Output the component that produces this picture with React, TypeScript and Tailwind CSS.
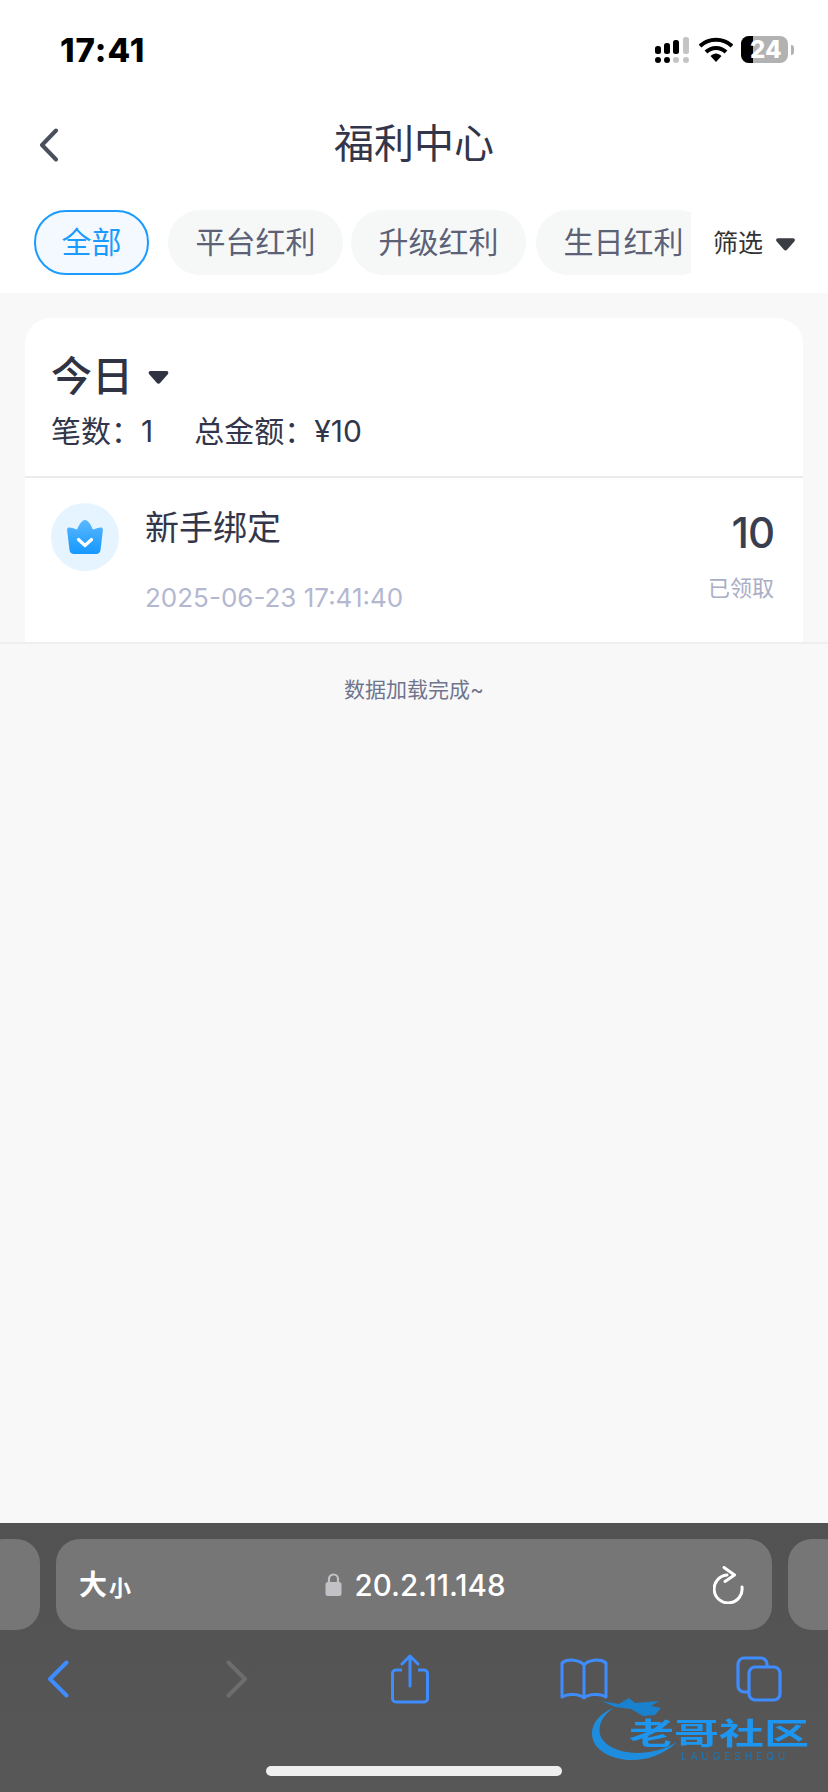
const font = "font-['Inter','Noto_Sans_CJK_SC',sans-serif]";

const tabs = [
  { label: "平台红利", cls: "w-[175px] ml-[19px]" },
  { label: "升级红利", cls: "w-[175px] ml-[8px]" },
  { label: "生日红利", cls: "w-[175px] ml-[10px]" },
];

const StatusIcons = () => (
  <div className="flex items-center">
    <svg width="34" height="26" viewBox="0 0 34 26" className="mt-[1px]">
      <rect x="0" y="9" width="6" height="8" rx="2.5" fill="#000" />
      <rect x="9" y="6" width="6" height="11" rx="2.5" fill="#000" />
      <rect x="18" y="3" width="6" height="14" rx="2.5" fill="#000" />
      <rect x="28" y="0" width="6" height="17" rx="2.5" fill="#c4c4c4" />
      <rect x="0" y="20" width="6" height="6" rx="3" fill="#000" />
      <rect x="9" y="20" width="6" height="6" rx="3" fill="#000" />
      <rect x="18" y="20" width="6" height="6" rx="3" fill="#c4c4c4" />
      <rect x="28" y="20" width="6" height="6" rx="3" fill="#c4c4c4" />
    </svg>
    <svg width="34" height="25" viewBox="0 0 34 25" className="ml-[10px]">
      <path d="M1 9C9.5 0.5 24.5 0.5 33 9" fill="none" stroke="#000" strokeWidth="4" />
      <path d="M7 15C12.5 9.5 21.5 9.5 27 15" fill="none" stroke="#000" strokeWidth="4" />
      <path d="M11.5 19C15 15.5 19 15.5 22.5 19L17 25Z" fill="#000" />
    </svg>
    <div className="relative ml-[8px] flex h-[27px] w-[47px] overflow-hidden rounded-[8px] bg-[#b2b2b2]">
      <div className="h-full w-[12px] bg-black" />
      <span className="absolute left-[9px] top-0 text-[24px] leading-[27px] font-extrabold text-white font-['Inter',sans-serif]">24</span>
    </div>
    <div className="ml-[3px] h-[10px] w-[3px] rounded-r-full bg-[#b2b2b2]" />
  </div>
);

const Triangle = ({ w, h, color }: { w: number; h: number; color: string }) => (
  <svg width={w} height={h} viewBox="0 0 20 13">
    <path d="M2 0H18C19.6 0 20.4 1.6 19.5 3L11.6 12C10.8 13 9.2 13 8.4 12L0.5 3C-0.4 1.6 0.4 0 2 0Z" fill={color} />
  </svg>
);

const Crown = () => (
  <svg width="36" height="34" viewBox="0 0 36 34">
    <defs>
      <linearGradient id="crown" x1="0" y1="0" x2="0" y2="1">
        <stop offset="0" stopColor="#5cb8ff" />
        <stop offset="1" stopColor="#1498ff" />
      </linearGradient>
    </defs>
    <path
      d="M1.5 7.5C3.5 7 7.5 8.5 10 9.5C12 5.5 14.5 0 18 0C21.5 0 24 5.5 26 9.5C28.5 8.5 32.5 7 34.5 7.5C36 8 36 9.5 35.8 11L33.5 30C33.2 32.5 31.5 34 29 34H7C4.5 34 2.8 32.5 2.5 30L0.2 11C0 9.5 0 8 1.5 7.5Z"
      fill="url(#crown)"
    />
    <path d="M11.5 19.5L18 25.5L24.5 19.5" fill="none" stroke="#fff" strokeWidth="3.2" strokeLinecap="round" strokeLinejoin="round" />
  </svg>
);

const Watermark = () => (
  <div className="pointer-events-none absolute right-[18px] bottom-[27px] h-[70px] w-[225px] blur-[0.6px]">
    <svg width="110" height="70" viewBox="0 0 110 70" className="absolute top-0 left-0 opacity-90">
      <path d="M28 13C12 20 4 32 8 45C15 66 62 76 92 47C68 62 30 62 17 44C11 34 16 22 28 13Z" fill="#1a94ee" />
      <path d="M17 6L34 9L44 3L50 8L74 6L66 11L76 13L70 20L58 21L46 14L30 12Z" fill="#1487dd" />
    </svg>
    <span className="absolute left-[44px] top-[19px] origin-left scale-x-150 text-[30px] leading-[34px] font-bold whitespace-nowrap text-[#1c96f0] font-['Noto_Sans_CJK_SC',sans-serif]">
      老哥社区
    </span>
    <span className="absolute left-[96px] top-[54px] text-[10px] leading-[14px] tracking-[4px] text-[#1a78bd] font-['Inter',sans-serif]">
      LAUGESHEQU
    </span>
  </div>
);

const App = () => {
  return (
    <div className={`flex h-[1792px] w-[828px] flex-col overflow-hidden bg-[#f8f8f8] ${font}`}>
      <header className="h-[293px] shrink-0 bg-white">
        <div className="flex h-[88px] items-start justify-between pt-[36px] pr-[34px] pl-[60px]">
          <span className="text-[33px] leading-[28px] font-extrabold tracking-[1px] text-black">17:41</span>
          <StatusIcons />
        </div>

        <div className="relative flex h-[112px] items-center justify-center">
          <svg width="20" height="34" viewBox="0 0 20 34" className="absolute left-[39px] top-[40px]">
            <path d="M17 2.5L3 17L17 31.5" fill="none" stroke="#4a4f5e" strokeWidth="4" strokeLinecap="round" strokeLinejoin="round" />
          </svg>
          <h1 className="text-[40px] leading-[56px] font-normal text-[#33364a]">福利中心</h1>
        </div>

        <div className="mt-[10px] flex h-[65px] items-center pl-[34px]">
          <div className="flex h-[65px] w-[657px] overflow-hidden">
            <div className="flex h-full w-[115px] shrink-0 items-center justify-center rounded-[32px] border-2 border-[#1a9bfd] bg-[#f3f9ff] text-[30px] text-[#1a9bfd]">
              全部
            </div>
            {tabs.map((tab) => (
              <div
                key={tab.label}
                className={`flex h-full shrink-0 items-center justify-center rounded-[32px] bg-[#f6f8f8] text-[30px] text-[#5c6176] ${tab.cls}`}
              >
                {tab.label}
              </div>
            ))}
          </div>
          <span className="ml-[22px] text-[25px] leading-[34px] text-[#333]">筛选</span>
          <div className="mt-[3px] ml-[13px]">
            <Triangle w={19} h={13} color="#3b3d45" />
          </div>
        </div>
      </header>

      <main className="flex-1">
        <section className="mx-[25px] mt-[25px] rounded-t-[26px] bg-white">
          <div className="h-[160px] border-b-2 border-[#ebebeb] pt-[33px] pl-[26px]">
            <div className="flex items-center">
              <span className="text-[41px] leading-[50px] font-medium text-[#2f3342]">今日</span>
              <div className="mt-[2px] ml-[15px]">
                <Triangle w={21} h={13} color="#2f3342" />
              </div>
            </div>
            <div className="mt-[11px] flex text-[30px] leading-[38px] text-[#33364a]">
              <span>笔数：1</span>
              <span className="ml-[41px]">总金额：¥10</span>
            </div>
          </div>

          <div className="flex h-[164px] pt-[25px] pr-[29px] pl-[26px]">
            <div className="flex h-[68px] w-[68px] shrink-0 items-center justify-center rounded-full bg-[#e6f4ff]">
              <Crown />
            </div>
            <div className="ml-[26px] flex-1">
              <div className="pt-[2px] text-[34px] leading-[46px] text-[#33364a]">新手绑定</div>
              <div className="mt-[29px] text-[26px] leading-[36px] text-[#b3b8d0]">2025-06-23 17:41:40</div>
            </div>
            <div className="flex flex-col items-end">
              <div className="mt-[6px] text-[42px] leading-[48px] font-medium tracking-[-1px] text-[#3a3f50]">10</div>
              <div className="mt-[16px] text-[22px] leading-[30px] text-[#a9aec6]">已领取</div>
            </div>
          </div>
        </section>
        <div className="h-[2px] bg-[#efefef]" />
        <p className="mt-[31px] text-center text-[21px] leading-[30px] text-[#70758e]">数据加载完成~</p>
      </main>

      <footer className="relative h-[269px] shrink-0 bg-gradient-to-b from-[#525252] to-[#575757]">
        <div className="flex justify-center gap-[16px] pt-[16px]">
          <div className="h-[91px] w-[60px] shrink-0 rounded-[24px] bg-[#767676]" />
          <div className="grid h-[91px] w-[716px] shrink-0 grid-cols-[1fr_auto_1fr] items-center rounded-[24px] bg-[#767676] text-white">
            <div className="flex items-end pl-[23px] leading-none font-bold">
              <span className="text-[28px]">大</span>
              <span className="ml-[2px] text-[22px]">小</span>
            </div>
            <div className="flex items-center pl-[2px]">
              <svg width="17" height="23" viewBox="0 0 17 23">
                <path d="M4 10V6a4.5 4.5 0 0 1 9 0v4" fill="none" stroke="#c2c2c6" strokeWidth="2.2" />
                <rect x="0.5" y="9" width="16" height="14" rx="2.5" fill="#c2c2c6" />
              </svg>
              <span className="ml-[13px] text-[29.5px] leading-[38px] font-medium">20.2.11.148</span>
            </div>
            <div className="flex justify-end pr-[27px]">
              <svg width="32" height="38" viewBox="0 0 32 38">
                <path d="M14 9A14 14 0 1 0 29 21" fill="none" stroke="#fff" strokeWidth="3" strokeLinecap="round" />
                <path d="M11 1.5L21.5 9L12 15.5" fill="none" stroke="#fff" strokeWidth="3" strokeLinecap="round" strokeLinejoin="round" />
              </svg>
            </div>
          </div>
          <div className="h-[91px] w-[60px] shrink-0 rounded-[24px] bg-[#767676]" />
        </div>

        <div className="mt-[24px] flex h-[50px] items-center pl-[47px]">
          <svg width="22" height="38" viewBox="0 0 22 38">
            <path d="M19.5 2.5L3 19L19.5 35.5" fill="none" stroke="#3f8cff" strokeWidth="4" strokeLinecap="round" strokeLinejoin="round" />
          </svg>
          <svg width="22" height="38" viewBox="0 0 22 38" className="ml-[157px]">
            <path d="M2.5 2.5L19 19L2.5 35.5" fill="none" stroke="#6d6d6d" strokeWidth="4" strokeLinecap="round" strokeLinejoin="round" />
          </svg>
          <svg width="38" height="50" viewBox="0 0 38 50" className="ml-[143px]">
            <path d="M11 16H5a3.5 3.5 0 0 0-3.5 3.5v25A3.5 3.5 0 0 0 5 48h28a3.5 3.5 0 0 0 3.5-3.5v-25A3.5 3.5 0 0 0 33 16h-6" fill="none" stroke="#3f8cff" strokeWidth="3" />
            <path d="M19 32V2M11 10L19 2L27 10" fill="none" stroke="#3f8cff" strokeWidth="3" strokeLinecap="round" strokeLinejoin="round" />
          </svg>
          <svg width="48" height="42" viewBox="0 0 48 42" className="ml-[131px]">
            <path d="M24 7C20 2 8 0 2 5V39C8 35 20 36 24 40C28 36 40 35 46 39V5C40 0 28 2 24 7ZM24 7V38" fill="none" stroke="#3f8cff" strokeWidth="3" strokeLinejoin="round" />
          </svg>
          <svg width="46" height="46" viewBox="0 0 46 46" className="ml-[128px]">
            <rect x="13" y="11" width="31" height="33" rx="6" fill="none" stroke="#3f8cff" strokeWidth="3.2" />
            <path d="M13 36H8a6 6 0 0 1-6-6V8a6 6 0 0 1 6-6h17a6 6 0 0 1 6 6v3" fill="none" stroke="#3f8cff" strokeWidth="3.2" />
          </svg>
        </div>

        <div className="absolute bottom-[16px] left-[266px] h-[10px] w-[296px] rounded-full bg-[#efefef]" />
        <Watermark />
      </footer>
    </div>
  );
};

export default App;
